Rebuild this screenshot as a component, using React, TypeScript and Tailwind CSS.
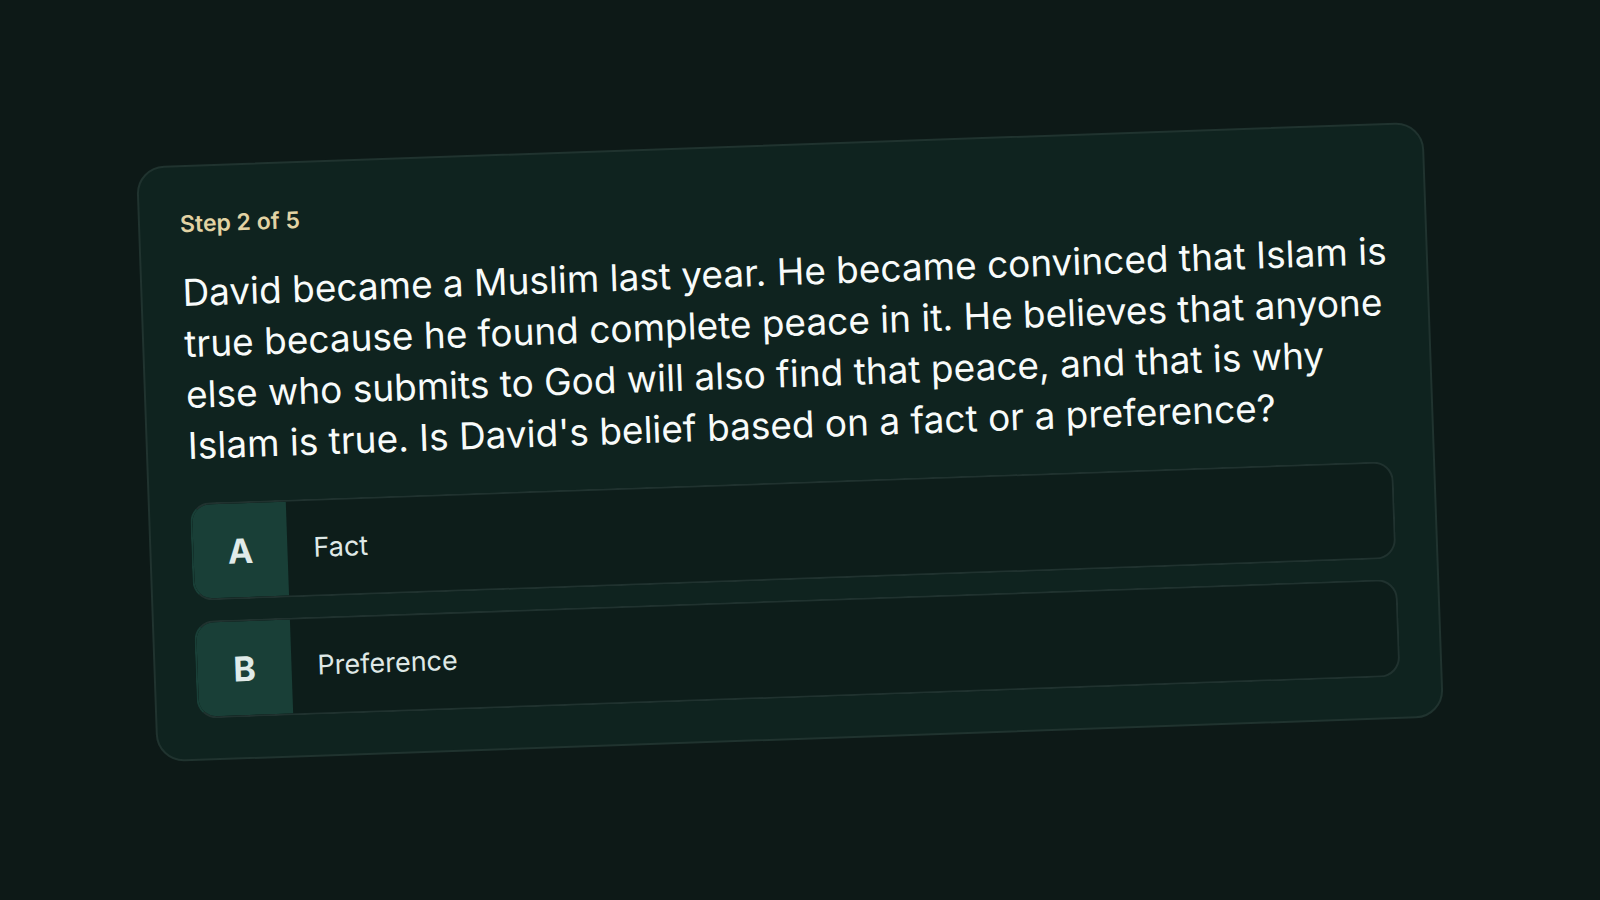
const options = [
  { letter: 'A', text: 'Fact' },
  { letter: 'B', text: 'Preference' },
];

export default function App() {
  return (
    <main className="flex min-h-screen items-center justify-center overflow-hidden bg-[#0d1917] pr-5 pb-4 font-['Inter',sans-serif]">
      <section className="w-full max-w-[1288px] -rotate-2 rounded-[28px] border-2 border-[#20332f] bg-[#0f231f] p-10">
        <p className="text-[23px] leading-[34px] font-semibold text-[#e2d3a4]">Step 2 of 5</p>
        <h1 className="-mr-2 mt-[26px] text-[37px] leading-[51px] font-normal text-[#f8fbfa]">
          David became a Muslim last year. He became convinced that Islam is true because he found
          complete peace in it. He believes that anyone else who submits to God will also find that
          peace, and that is why Islam is true. Is David's belief based on a fact or a preference?
        </h1>
        <div className="mt-8 flex flex-col gap-5">
          {options.map((option) => (
            <button
              key={option.letter}
              type="button"
              className="flex h-[98px] w-full items-stretch overflow-hidden rounded-[20px] border-2 border-[#20322f] border-l-[#193f37] bg-[#0d1d1a] text-left"
            >
              <span className="flex w-[94px] items-center justify-center bg-[#193f37] text-[34px] font-bold text-[#e0ebe9]">
                {option.letter}
              </span>
              <span className="flex items-center px-[26px] text-[27px] text-[#dfe8e6]">{option.text}</span>
            </button>
          ))}
        </div>
      </section>
    </main>
  );
}
